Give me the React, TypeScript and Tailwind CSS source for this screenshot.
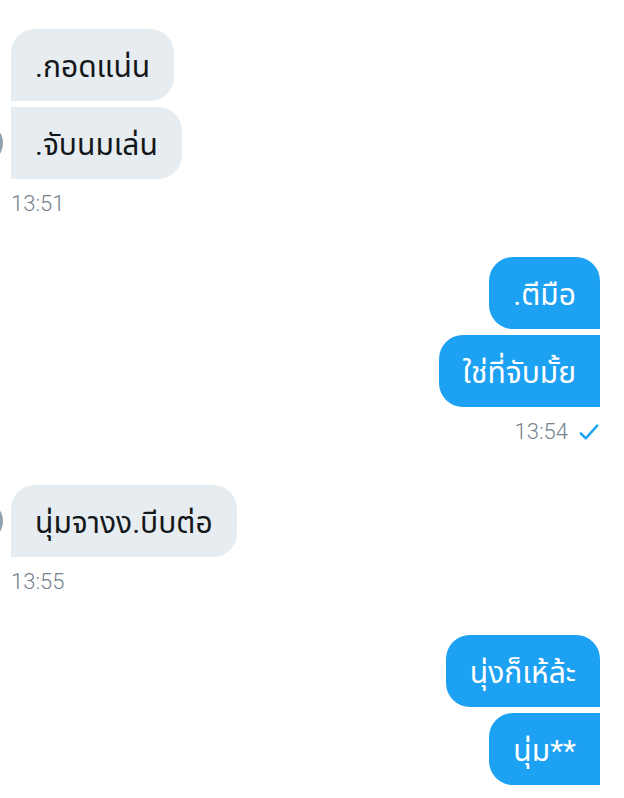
import React from 'react';

type Msg = { text: string; corners: string; avatar?: boolean };

const font = { fontFamily: 'Roboto, "Noto Sans Thai", "Noto Sans", sans-serif' };

function Avatar() {
    return <div className="w-10 h-10 rounded-full bg-[#8fa0ae] -ml-[37px] mr-[8px] shrink-0" />;
}

function Received({ msgs, time }: { msgs: Msg[]; time: string }) {
    return (
        <div className="flex flex-col items-start">
            {msgs.map((m, i) => (
                <div key={i} className={`flex items-center ${i > 0 ? 'mt-[6px]' : ''} ${m.avatar ? '' : 'pl-[11px]'}`}>
                    {m.avatar && <Avatar />}
                    <div className={`h-[72px] flex items-center px-6 pt-[2px] bg-[#e6ecf0] text-[#14171a] text-[30px] ${m.corners}`}>
                        {m.text}
                    </div>
                </div>
            ))}
            <div className="pl-[11px] mt-[10px] text-[22px] leading-[30px] font-light text-[#74838f]">{time}</div>
        </div>
    );
}

function Sent({ msgs, time }: { msgs: Msg[]; time: string }) {
    return (
        <div className="flex flex-col items-end pr-6">
            {msgs.map((m, i) => (
                <div
                    key={i}
                    className={`h-[72px] flex items-center px-6 pt-[2px] bg-[#1da1f2] text-white text-[30px] ${i > 0 ? 'mt-[6px]' : ''} ${m.corners}`}
                >
                    {m.text}
                </div>
            ))}
            <div className="mt-[10px] flex items-center gap-[10px] text-[22px] leading-[30px] font-light text-[#74838f]">
                <span>{time}</span>
                <svg width="22" height="22" viewBox="0 0 24 24" fill="none" stroke="#1da1f2" strokeWidth={2.6} strokeLinecap="round" strokeLinejoin="round">
                    <path d="M3 13.5l5.5 5.5L21 5" />
                </svg>
            </div>
        </div>
    );
}

export default function App() {
    return (
        <div className="w-[624px] h-[798px] overflow-hidden bg-white pt-[29px]" style={font}>
            <Received
                msgs={[
                    { text: '.กอดแน่น', corners: 'rounded-tl-[24px] rounded-r-[24px]' },
                    { text: '.จับนมเล่น', corners: 'rounded-r-[24px]', avatar: true },
                ]}
                time="13:51"
            />
            <div className="mt-[38px]">
                <Sent
                    msgs={[
                        { text: '.ตีมือ', corners: 'rounded-l-[24px] rounded-tr-[24px]' },
                        { text: 'ใช่ที่จับมั้ย', corners: 'rounded-l-[24px]' },
                    ]}
                    time="13:54"
                />
            </div>
            <div className="mt-[38px]">
                <Received msgs={[{ text: 'นุ่มจางง.บีบต่อ', corners: 'rounded-tl-[24px] rounded-r-[24px]', avatar: true }]} time="13:55" />
            </div>
            <div className="mt-[38px]">
                <Sent
                    msgs={[
                        { text: 'นุ่งก็เห้ล้ะ', corners: 'rounded-l-[24px] rounded-tr-[24px]' },
                        { text: 'นุ่ม**', corners: 'rounded-l-[24px]' },
                    ]}
                    time="13:56"
                />
            </div>
        </div>
    );
}
